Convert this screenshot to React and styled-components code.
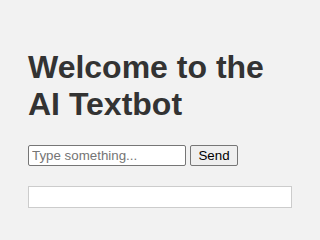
import React, { useState } from 'react';
import styled, { createGlobalStyle } from 'styled-components';

const GlobalStyle = createGlobalStyle`
  body {
    margin: 8px;
    background-color: #f2f2f2;
    font-family: "Liberation Sans", Arial, sans-serif;
  }
`

const Container = styled.div`
  padding: 20px;
`

const Title = styled.h1`
  color: #333333;
  font-size: 32px;
  margin: 21px 0 22px;
`

const InputRow = styled.form`
  display: flex;
  align-items: center;
  gap: 4px;
`

const TextInput = styled.input`
  box-sizing: border-box;
  font-family: "Liberation Sans", Arial, sans-serif;
  font-size: 13.33px;
  width: 158px;
  height: 21px;
  padding: 1px 3px;
  border: 1px solid #767676;
  border-radius: 2px;
  background: white;
  &::placeholder {
    color: #757575;
  }
`

const SendButton = styled.button`
  box-sizing: border-box;
  font-family: "Liberation Sans", Arial, sans-serif;
  font-size: 13.33px;
  width: 48px;
  height: 21px;
  padding: 1px 6px;
  border: 1px solid #767676;
  border-radius: 2px;
  background: #efefef;
  color: black;
`

const Output = styled.div`
  margin-top: 20px;
  padding: 10px;
  background: white;
  border: 1px solid #cccccc;
`

export default function App() {
  const [text, setText] = useState('');
  const [reply, setReply] = useState('');

  const handleSubmit = (e) => {
    e.preventDefault();
    setReply(text);
  };

  return (
    <Container>
      <GlobalStyle />
      <Title>Welcome to the AI Textbot</Title>
      <InputRow onSubmit={handleSubmit}>
        <TextInput
          type="text"
          placeholder="Type something..."
          value={text}
          onChange={(e) => setText(e.target.value)}
        />
        <SendButton type="submit">Send</SendButton>
      </InputRow>
      <Output>{reply}</Output>
    </Container>
  );
}
